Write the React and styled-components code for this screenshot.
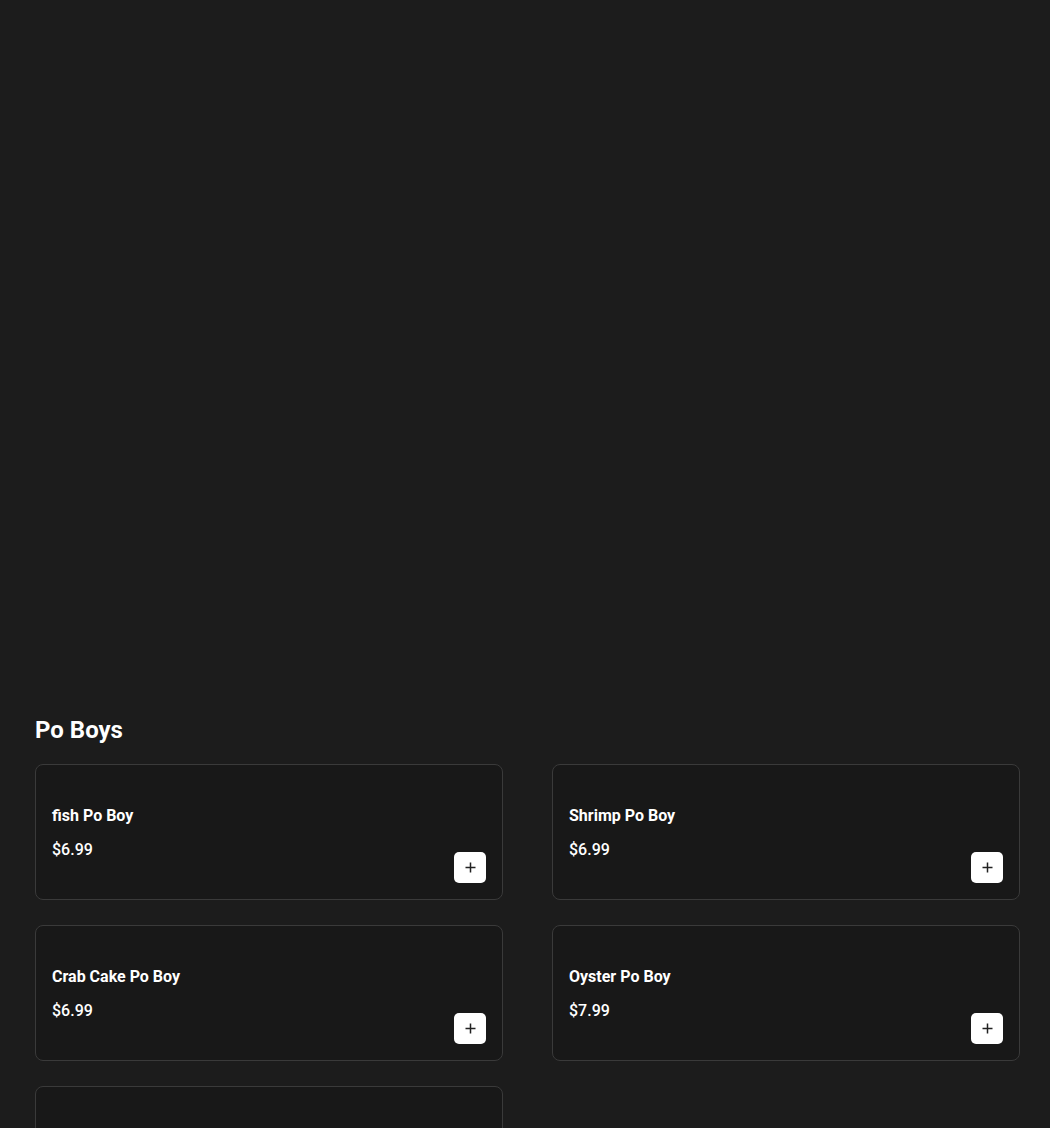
import styled, { createGlobalStyle } from 'styled-components';

const GlobalStyle = createGlobalStyle`
  html, body {
    margin: 0;
    padding: 0;
    background: #1c1c1c;
    font-family: Roboto, "Liberation Sans", sans-serif;
    color: #fff;
  }
`;

const Page = styled.div`
  min-height: 1128px;
  background: #1c1c1c;
`;

// empty hero area above the menu section
const Hero = styled.div`
  height: 715px;
`;

const Section = styled.section`
  padding: 0 30px 0 35px;
`;

const SectionTitle = styled.h2`
  margin: 0 0 19px;
  font-size: 24px;
  line-height: 30px;
  font-weight: 700;
  color: #fff;
`;

const Grid = styled.div`
  display: grid;
  grid-template-columns: 1fr 1fr;
  column-gap: 49px;
  row-gap: 25px;
`;

const Card = styled.div`
  box-sizing: border-box;
  height: 136px;
  display: flex;
  justify-content: space-between;
  padding: 41px 16px 16px 16px;
  background: #181818;
  border: 1px solid #3a3a3a;
  border-radius: 8px;
`;

const Info = styled.div`
  display: flex;
  flex-direction: column;
  gap: 14px;
`;

const Name = styled.div`
  font-size: 16px;
  line-height: 20px;
  font-weight: 700;
`;

const Price = styled.div`
  font-size: 16px;
  line-height: 20px;
  font-weight: 500;
`;

const AddButton = styled.button`
  align-self: flex-end;
  width: 32px;
  height: 31px;
  padding: 0;
  display: flex;
  align-items: center;
  justify-content: center;
  background: #fff;
  border: none;
  border-radius: 5px;
  cursor: pointer;
`;

const PlusIcon = () => (
  <svg width="11" height="11" viewBox="0 0 11 11" fill="none">
    <path d="M5.5 0.5v10M0.5 5.5h10" stroke="#222" strokeWidth="1.5" />
  </svg>
);

const items = [
  { name: 'fish Po Boy', price: '$6.99' },
  { name: 'Shrimp Po Boy', price: '$6.99' },
  { name: 'Crab Cake Po Boy', price: '$6.99' },
  { name: 'Oyster Po Boy', price: '$7.99' },
  { name: '', price: '' },
];

export default function App() {
  return (
    <Page>
      <GlobalStyle />
      <Hero />
      <Section>
        <SectionTitle>Po Boys</SectionTitle>
        <Grid>
          {items.map((item, i) => (
            <Card key={i}>
              {item.name && (
                <>
                  <Info>
                    <Name>{item.name}</Name>
                    <Price>{item.price}</Price>
                  </Info>
                  <AddButton aria-label="Add">
                    <PlusIcon />
                  </AddButton>
                </>
              )}
            </Card>
          ))}
        </Grid>
      </Section>
    </Page>
  );
}
